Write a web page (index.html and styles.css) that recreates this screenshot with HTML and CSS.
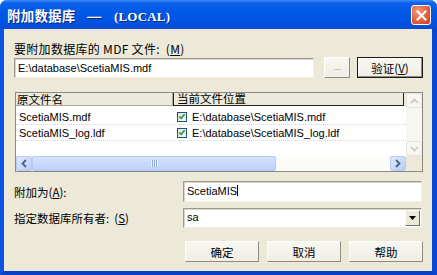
FILE: index.html
```html
<!DOCTYPE html>
<html lang="zh-CN">
<head>
  <meta charset="UTF-8">
  <title>附加数据库</title>
  <link rel="stylesheet" href="styles.css">
</head>
<body>
<div class="window">
  <div class="titlebar">
    <div class="title">附加数据库<span class="dash">—</span><span class="server">(LOCAL)</span></div>
    <div class="close">
      <svg width="11" height="11" viewBox="0 0 11 11"><path d="M1.5 1.5 L9.5 9.5 M9.5 1.5 L1.5 9.5" stroke="#fff" stroke-width="2" stroke-linecap="square"/></svg>
    </div>
  </div>

  <div class="client">
    <div class="label top-label">要附加数据库的 MDF 文件:&nbsp; (<u>M</u>)</div>
    <div class="file-row">
      <div class="textbox file-path">E:\database\ScetiaMIS.mdf</div>
      <div class="btn browse">...</div>
      <div class="btn btn-default">验证(<u>V</u>)</div>
    </div>

    <div class="listview">
      <div class="lv-top">
        <div class="lv-content">
          <div class="lv-header">
            <div class="col c1">原文件名</div>
            <div class="col c2 active">当前文件位置</div>
          </div>
          <div class="lv-rows">
            <div class="lv-row">
              <div class="cell c1">ScetiaMIS.mdf</div>
              <div class="cell c2"><span class="check"><svg width="9" height="9" viewBox="0 0 9 9"><path d="M1.5 4.5 L3.5 6.5 L7.5 2" fill="none" stroke="#21a121" stroke-width="1.8"/></svg></span>E:\database\ScetiaMIS.mdf</div>
            </div>
            <div class="lv-row">
              <div class="cell c1">ScetiaMIS_log.ldf</div>
              <div class="cell c2"><span class="check"><svg width="9" height="9" viewBox="0 0 9 9"><path d="M1.5 4.5 L3.5 6.5 L7.5 2" fill="none" stroke="#21a121" stroke-width="1.8"/></svg></span>E:\database\ScetiaMIS_log.ldf</div>
            </div>
          </div>
        </div>
        <div class="vscroll">
          <div class="sb-btn disabled"><svg width="9" height="6" viewBox="0 0 9 6"><path d="M1 5 L4.5 1.5 L8 5" fill="none" stroke="#c9c6b8" stroke-width="1.6"/></svg></div>
          <div class="sb-track"></div>
          <div class="sb-btn disabled"><svg width="9" height="6" viewBox="0 0 9 6"><path d="M1 1 L4.5 4.5 L8 1" fill="none" stroke="#c9c6b8" stroke-width="1.6"/></svg></div>
        </div>
      </div>
      <div class="lv-bottom">
        <div class="hscroll">
          <div class="sb-btn"><svg width="6" height="9" viewBox="0 0 6 9"><path d="M5 1 L1.5 4.5 L5 8" fill="none" stroke="#4d6185" stroke-width="1.8"/></svg></div>
          <div class="thumb"><span class="grip"></span></div>
          <div class="sb-track"></div>
          <div class="sb-btn"><svg width="6" height="9" viewBox="0 0 6 9"><path d="M1 1 L4.5 4.5 L1 8" fill="none" stroke="#4d6185" stroke-width="1.8"/></svg></div>
        </div>
        <div class="corner"></div>
      </div>
    </div>

    <div class="field-row attach-row">
      <div class="label">附加为(<u>A</u>):</div>
      <div class="textbox field">ScetiaMIS<span class="caret"></span></div>
    </div>
    <div class="field-row owner-row">
      <div class="label">指定数据库所有者:&nbsp; (<u>S</u>)</div>
      <div class="textbox field combo">
        <span>sa</span>
        <div class="drop"><svg width="7" height="4" viewBox="0 0 7 4"><path d="M0 0 H7 L3.5 4 Z" fill="#000"/></svg></div>
      </div>
    </div>

    <div class="actions">
      <div class="btn action">确定</div>
      <div class="btn action">取消</div>
      <div class="btn action">帮助</div>
    </div>
  </div>
</div>
</body>
</html>
```

FILE: styles.css
```css
* {
  box-sizing: border-box;
}
body {
  margin: 0;
  width: 437px;
  height: 275px;
  overflow: hidden;
  font-family: "Liberation Sans", "Noto Sans CJK SC", sans-serif;
  font-size: 11px;
  color: #000;
}
u {
  text-decoration: underline;
}
.window {
  width: 437px;
  height: 275px;
  background: #ece9d8;
  border-left: 4px solid #0b55e2;
  border-right: 5px solid #0747d2;
  border-bottom: 4px solid #0641c8;
  border-radius: 7px 7px 0 0;
  display: flex;
  flex-direction: column;
}
.titlebar {
  height: 29px;
  margin: 0 -5px 0 -4px;
  border-radius: 7px 7px 0 0;
  background: linear-gradient(#3d8cf6 0, #0d62ea 3px, #0058e8 40%, #0052e0 80%, #0a4bd6 100%);
  display: flex;
  align-items: center;
  justify-content: space-between;
  padding: 0 6px 0 7px;
}
.title {
  color: #fff;
  font-family: "Noto Sans CJK SC", sans-serif;
  font-weight: bold;
  font-size: 13.5px;
  text-shadow: 1px 1px 0 #0b2a7a;
  letter-spacing: 0.2px;
  margin-top: 1px;
}
.dash {
  display: inline-block;
  transform: scaleX(1.3);
  margin: 0 14px 0 12px;
}
.server {
  font-family: "Liberation Serif", serif;
  font-size: 13px;
}
.close {
  width: 20px;
  height: 20px;
  border: 1px solid #fff;
  border-radius: 3px;
  background: radial-gradient(circle at 35% 30%, #f09a7e 0, #e2603d 55%, #c8401f 100%);
  display: flex;
  align-items: center;
  justify-content: center;
  margin-top: 1px;
}
.client {
  flex: 1;
  padding: 13px 0 0 10px;
  display: flex;
  flex-direction: column;
}
.label {
  font-family: "Noto Sans CJK SC", sans-serif;
  font-size: 11.5px;
  line-height: 14px;
  height: 14px;
  white-space: nowrap;
}
.top-label {
  font-size: 12px;
  letter-spacing: 0.3px;
}
.file-row {
  display: flex;
  align-items: center;
  margin-top: 1px;
  height: 21px;
}
.textbox {
  background: #fff;
  border: 1px solid;
  border-color: #9c9a8c #f1efe2 #f1efe2 #9c9a8c;
  box-shadow: inset 1px 1px 0 #d8d5c6;
  height: 20px;
  line-height: 18px;
  padding-left: 3px;
  white-space: nowrap;
}
.file-path {
  width: 300px;
}
.btn {
  height: 21px;
  border: 1px solid;
  border-color: #fdfdfb #8f8c80 #8f8c80 #fdfdfb;
  background: linear-gradient(#f8f7f2, #efede4);
  display: flex;
  align-items: center;
  justify-content: center;
  font-family: "Noto Sans CJK SC", sans-serif;
  font-size: 11.5px;
}
.browse {
  width: 26px;
  margin-left: 10px;
  color: #8a877c;
  font-family: "Liberation Sans", sans-serif;
  font-size: 9px;
  padding-bottom: 2px;
}
.btn-default {
  width: 66px;
  margin-left: 7px;
  border: 1px solid #1a1a1a;
  box-shadow: inset -1px -1px 0 #8f8c80, inset 1px 1px 0 #fff;
}
.listview {
  margin: 14px 0 0 1px;
  width: 408px;
  height: 80px;
  border: 1px solid #8c8a80;
  background: #fff;
  display: flex;
  flex-direction: column;
}
.lv-top {
  display: flex;
  height: 63px;
}
.lv-content {
  width: 390px;
}
.lv-header {
  display: flex;
  height: 13px;
  background: #ebeadb;
  font-family: "Noto Sans CJK SC", sans-serif;
  font-size: 11.5px;
  line-height: 12px;
}
.col {
  height: 13px;
  white-space: nowrap;
}
.col.c1 {
  width: 157px;
  padding-left: 1px;
  border-right: 1px solid #aca899;
  border-bottom: 1px solid #aca899;
}
.col.c2 {
  width: 231px;
  padding-left: 3px;
}
.col.active {
  border: 1px solid #222;
  border-top: none;
  line-height: 11px;
}
.lv-rows {
  padding-top: 3px;
}
.lv-row {
  display: flex;
  height: 16px;
  line-height: 16px;
  border-bottom: 1px dotted #d7d5cc;
  white-space: nowrap;
}
.cell.c1 {
  width: 157px;
  padding-left: 3px;
}
.cell.c2 {
  padding-left: 4px;
  display: flex;
  align-items: center;
}
.check {
  width: 10px;
  height: 10px;
  border: 1px solid #1c5180;
  background: linear-gradient(135deg, #dcdcd7, #fff);
  display: flex;
  align-items: center;
  justify-content: center;
  margin-right: 5px;
}
.vscroll {
  width: 16px;
  display: flex;
  flex-direction: column;
  background: #f5f4ef;
}
.sb-btn {
  width: 16px;
  height: 15px;
  border: 1px solid #b7c9f3;
  border-radius: 2px;
  background: linear-gradient(135deg, #e1eafe, #b8ccf8);
  display: flex;
  align-items: center;
  justify-content: center;
}
.sb-btn.disabled {
  border-color: #e8e6dc;
  background: #f7f6f1;
}
.sb-track {
  flex: 1;
  background: #f7f6f1;
}
.lv-bottom {
  display: flex;
  height: 15px;
}
.hscroll {
  width: 390px;
  display: flex;
  background: #fbfbf8;
}
.hscroll .sb-track {
  background: #fbfbf8;
}
.thumb {
  width: 244px;
  height: 15px;
  border: 1px solid #b5c7f3;
  border-radius: 2px;
  background: linear-gradient(#d6e2fd, #bdd1fb);
  display: flex;
  align-items: center;
  justify-content: center;
}
.grip {
  width: 7px;
  height: 7px;
  background: repeating-linear-gradient(90deg, #eef3ff 0, #eef3ff 1px, #8ea8e8 1px, #8ea8e8 2px);
}
.corner {
  width: 16px;
  background: #ece9d8;
}
.field-row {
  display: flex;
  align-items: center;
  height: 21px;
}
.attach-row {
  margin-top: 9px;
}
.owner-row {
  margin-top: 5px;
}
.field-row .label {
  width: 169px;
}
.field {
  width: 239px;
  height: 21px;
  line-height: 19px;
}
.caret {
  display: inline-block;
  width: 1px;
  height: 11px;
  background: #000;
  vertical-align: -1px;
}
.combo {
  display: flex;
  align-items: center;
  justify-content: space-between;
  padding-right: 1px;
  height: 20px;
}
.drop {
  width: 15px;
  height: 16px;
  border: 1px solid;
  border-color: #fdfdfb #6f6d64 #6f6d64 #fdfdfb;
  background: #ece9d8;
  display: flex;
  align-items: center;
  justify-content: center;
}
.actions {
  display: flex;
  gap: 8px;
  margin: 13px 0 0 171px;
}
.action {
  width: 74px;
}
```
